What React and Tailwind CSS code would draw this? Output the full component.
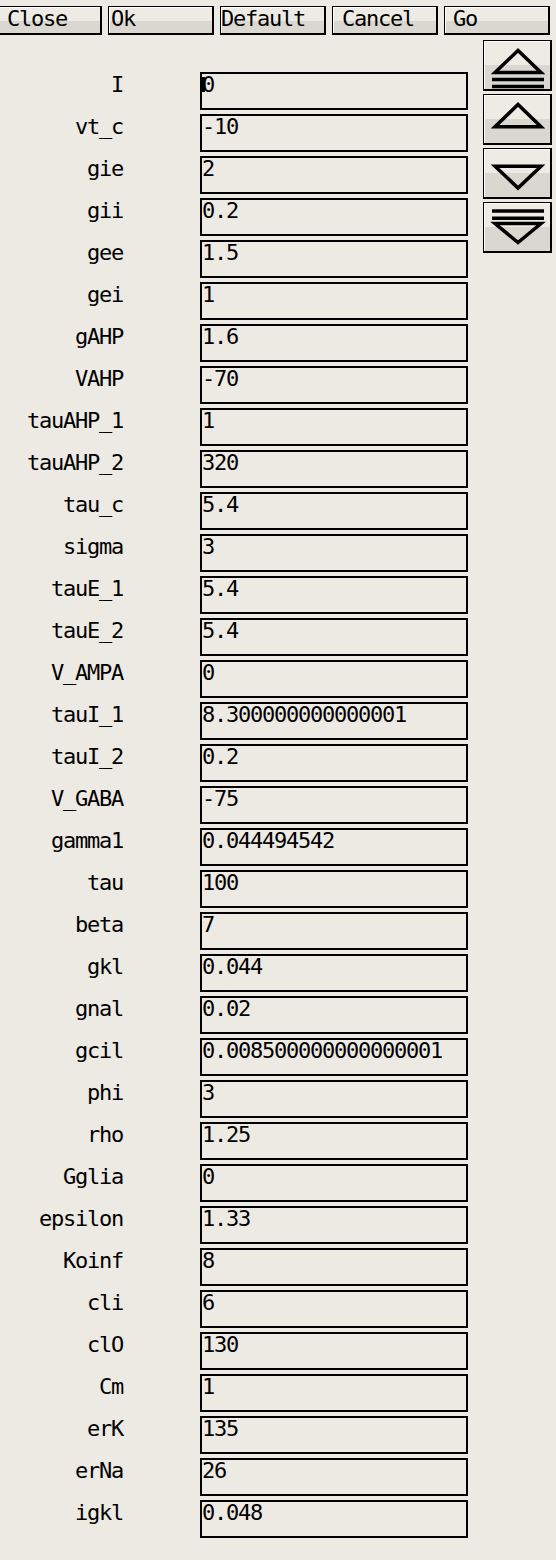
import React from 'react';

const params = [
  ['I', '0'],
  ['vt_c', '-10'],
  ['gie', '2'],
  ['gii', '0.2'],
  ['gee', '1.5'],
  ['gei', '1'],
  ['gAHP', '1.6'],
  ['VAHP', '-70'],
  ['tauAHP_1', '1'],
  ['tauAHP_2', '320'],
  ['tau_c', '5.4'],
  ['sigma', '3'],
  ['tauE_1', '5.4'],
  ['tauE_2', '5.4'],
  ['V_AMPA', '0'],
  ['tauI_1', '8.300000000000001'],
  ['tauI_2', '0.2'],
  ['V_GABA', '-75'],
  ['gamma1', '0.044494542'],
  ['tau', '100'],
  ['beta', '7'],
  ['gkl', '0.044'],
  ['gnal', '0.02'],
  ['gcil', '0.008500000000000001'],
  ['phi', '3'],
  ['rho', '1.25'],
  ['Gglia', '0'],
  ['epsilon', '1.33'],
  ['Koinf', '8'],
  ['cli', '6'],
  ['clO', '130'],
  ['Cm', '1'],
  ['erK', '135'],
  ['erNa', '26'],
  ['igkl', '0.048'],
];

// bevelled X-style button face
const face =
  'border-black border-t border-l border-r-2 border-b-2 shadow-[inset_1px_1px_0_#ffffff]';

const TopButton = ({ label, pad }) => (
  <div
    className={`w-[106px] h-[29px] shrink-0 ${face} bg-[linear-gradient(to_bottom,#eeebe5_55%,#dad7d0_55%)] ${pad} leading-[24px]`}
  >
    {label}
  </div>
);

const Arrow = ({ kind }) => (
  <div className={`w-[69px] h-[51px] ${face} bg-[linear-gradient(to_bottom,#eeebe5_50%,#dad7d0_50%)]`}>
    <svg width="66" height="48" viewBox="0 0 66 48" fill="none" stroke="#000" strokeWidth="3.5">
      {kind === 'top' && (
        <>
          <polygon points="11,31.5 57,31.5 34,9.5" />
          <line x1="8" y1="38.5" x2="60" y2="38.5" />
          <line x1="8" y1="45.5" x2="60" y2="45.5" />
        </>
      )}
      {kind === 'up' && <polygon points="11,31.8 57,31.8 34,9.5" />}
      {kind === 'down' && <polygon points="11,17.2 57,17.2 34,39" />}
      {kind === 'bottom' && (
        <>
          <line x1="8" y1="8" x2="60" y2="8" />
          <line x1="8" y1="15.3" x2="60" y2="15.3" />
          <polygon points="11,20.5 57,20.5 34,39.5" />
        </>
      )}
    </svg>
  </div>
);

const App = () => {
  return (
    <div
      className="min-h-screen w-[556px] overflow-hidden bg-[#edeae4] text-black text-[22px] tracking-[-1.24px]"
      style={{ fontFamily: '"DejaVu Sans Mono", "Liberation Mono", monospace' }}
    >
      {/* barra de botones */}
      <div className="flex gap-[6px] pt-[6px] -ml-1">
        <TopButton label="Close" pad="pl-[10px]" />
        <TopButton label="Ok" pad="pl-[2px]" />
        <TopButton label="Default" pad="pl-0" />
        <TopButton label="Cancel" pad="pl-[9px]" />
        <TopButton label="Go" pad="pl-[8px]" />
      </div>

      <div className="flex items-start mt-[5px]">
        {/* lista de parametros */}
        <div className="w-[468px] shrink-0 pt-[32px] flex flex-col gap-[4px]">
          {params.map(([name, value], i) => (
            <div key={name} className="flex h-[38px]">
              <div className="w-[123px] text-right pt-[2px] leading-[22px] whitespace-nowrap">{name}</div>
              <div className="relative ml-[77px] w-[268px] h-[38px] border-2 border-black leading-[22px] whitespace-nowrap overflow-hidden">
                {i === 0 && <span className="absolute left-0 top-[3px] w-[3px] h-[15px] bg-black" />}
                {value}
              </div>
            </div>
          ))}
        </div>

        {/* flechas de desplazamiento */}
        <div className="ml-[15px] flex flex-col gap-[3px]">
          <Arrow kind="top" />
          <Arrow kind="up" />
          <Arrow kind="down" />
          <Arrow kind="bottom" />
        </div>
      </div>
    </div>
  );
};

export default App;
